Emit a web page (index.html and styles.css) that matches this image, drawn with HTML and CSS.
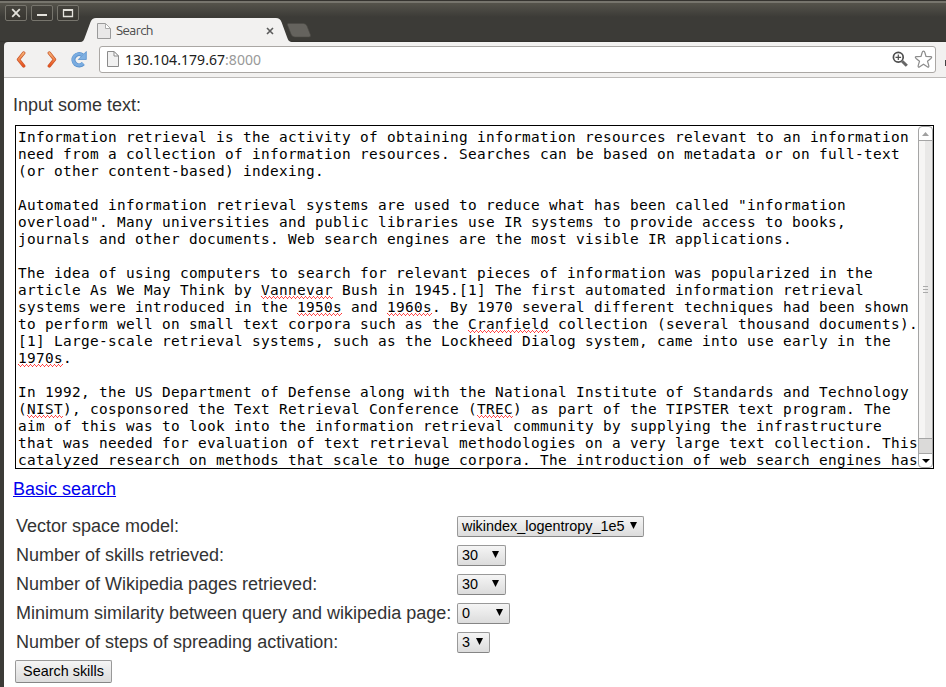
FILE: index.html
```html
<!DOCTYPE html>
<html lang="en">
<head>
<meta charset="utf-8">
<title>Search</title>
<link rel="stylesheet" href="styles.css">
</head>
<body>
<div class="window">
  <header class="titlebar">
    <div class="controls">
      <span class="control"><svg width="20" height="14" viewBox="0 0 20 14"><path d="M6.2 3.2l7.6 7.6M13.800 3.200l-7.600 7.600" stroke="#e4e2dc" stroke-width="1.800"/></svg></span>
      <span class="control"><svg width="20" height="14" viewBox="0 0 20 14"><path d="M5 9h10" stroke="#e4e2dc" stroke-width="2"/></svg></span>
      <span class="control"><svg width="20" height="14" viewBox="0 0 20 14"><path d="M5.500 4h9v6.500h-9z" fill="none" stroke="#e4e2dc" stroke-width="1.300"/><path d="M5 4h10" stroke="#e4e2dc" stroke-width="2"/></svg></span>
    </div>
    <div class="tab">
      <svg class="tab-shape" width="214" height="24" viewBox="0 0 214 24"><path d="M0 24C3 24 4 22 5 19L10.500 4Q12 0 16 0H196Q200 0 201.500 4L207 19C208 22 209 24 213 24Z" fill="#f2f1f0"/></svg>
      <div class="tab-content">
        <svg width="14" height="16" viewBox="0 0 14 16"><path d="M.5.5h8l5 5v10H.5z" fill="#e9e8e8" stroke="#9a9a9a"/><path d="M8.500.500v5h5z" fill="#fff" stroke="#aaa"/></svg>
        <span class="tab-title">Search</span>
        <svg class="tab-close" width="8" height="8" viewBox="0 0 8 8"><path d="M1 1l6 6M7 1L1 7" stroke="#5b5b5b" stroke-width="1.600"/></svg>
      </div>
    </div>
    <svg class="new-tab" width="26" height="15" viewBox="0 0 26 15"><path d="M2 .5H17.500Q20 .5 21 3L24.500 12Q25 14 23 14H9Q6 14 5 11L1.500 2Q1 .5 2 .5Z" fill="#65635e" stroke="#4b4944" stroke-width=".6"/></svg>
  </header>
  <div class="toolbar">
    <svg class="back" width="10" height="17" viewBox="0 0 10 17"><path d="M7.700 2L2.500 8.500l5.200 6.500" fill="none" stroke="#c9572c" stroke-width="3.400" stroke-linecap="round" stroke-linejoin="round"/><path d="M7.700 2L2.500 8.500l5.200 6.500" fill="none" stroke="url(#orange)" stroke-width="2" stroke-linecap="round" stroke-linejoin="round"/><defs><linearGradient id="orange" x2="0" y2="1"><stop stop-color="#f6b476"/><stop offset="1" stop-color="#e9501c"/></linearGradient></defs></svg>
    <svg class="forward" width="10" height="17" viewBox="0 0 10 17"><path d="M2.300 2l5.200 6.500L2.300 15" fill="none" stroke="#c9572c" stroke-width="3.400" stroke-linecap="round" stroke-linejoin="round"/><path d="M2.300 2l5.200 6.500L2.300 15" fill="none" stroke="url(#orange)" stroke-width="2" stroke-linecap="round" stroke-linejoin="round"/></svg>
    <svg class="reload" width="17" height="17" viewBox="0 0 17 17"><path d="M12.500 4.300A5.600 5.600 0 1 0 13.300 12.500" fill="none" stroke="#5b92cd" stroke-width="4.200"/><path d="M16.300.5v8H8.300z" fill="#7fb0e2" stroke="#5b92cd" stroke-width=".8"/><path d="M12.500 4.300A5.600 5.600 0 1 0 13 12.300" fill="none" stroke="#7aace0" stroke-width="2.800"/></svg>
    <div class="address">
      <svg width="12" height="16" viewBox="0 0 12 16"><path d="M.5.5h6.500l4.500 4.500v10.500H.5z" fill="#f1f1f1" stroke="#8b8b8b"/><path d="M7 .5V5h4.500z" fill="#fff" stroke="#8b8b8b"/></svg>
      <span class="url">130.104.179.67<span class="port">:8000</span></span>
      <svg class="magnifier" width="17" height="17" viewBox="0 0 17 17"><circle cx="6.300" cy="6.300" r="4.900" fill="#fff" stroke="#4d4d4d" stroke-width="1.700"/><path d="M3.500 6.300h5.600M6.300 3.500v5.600" stroke="#4d4d4d" stroke-width="1.200"/><path d="M10.200 10.200l4.600 4.600" stroke="#666" stroke-width="3"/></svg>
      <svg class="star" width="19" height="19" viewBox="0 0 19 19"><path d="M9.500 1.200Q10.500 1.200 11 3l1 3.500 4.500.2q2.200.2.400 1.800l-3.400 2.700 1.300 4.500q.4 2.200-1.500 1L9.500 14.200l-3.800 2.500q-1.900 1.200-1.500-1l1.300-4.500L2.100 8.500Q.3 6.900 2.500 6.700L7 6.500 8 3q.5-1.800 1.500-1.800z" fill="#fff" stroke="#8b8b8b" stroke-width="1.200"/></svg>
    </div>
    <span class="menu-edge"></span>
  </div>
  <main class="page">
    <div class="prompt">Input some text:</div>
    <div class="textbox">
<div class="text">Information retrieval is the activity of obtaining information resources relevant to an information
need from a collection of information resources. Searches can be based on metadata or on full-text
(or other content-based) indexing.

Automated information retrieval systems are used to reduce what has been called "information
overload". Many universities and public libraries use IR systems to provide access to books,
journals and other documents. Web search engines are the most visible IR applications.

The idea of using computers to search for relevant pieces of information was popularized in the
article As We May Think by <span class="sp">Vannevar</span> Bush in 1945.[1] The first automated information retrieval
systems were introduced in the <span class="sp">1950s</span> and <span class="sp">1960s</span>. By 1970 several different techniques had been shown
to perform well on small text corpora such as the <span class="sp">Cranfield</span> collection (several thousand documents).
[1] Large-scale retrieval systems, such as the Lockheed Dialog system, came into use early in the
<span class="sp">1970s</span>.

In 1992, the US Department of Defense along with the National Institute of Standards and Technology
(<span class="sp">NIST</span>), cosponsored the Text Retrieval Conference (<span class="sp">TREC</span>) as part of the TIPSTER text program. The
aim of this was to look into the information retrieval community by supplying the infrastructure
that was needed for evaluation of text retrieval methodologies on a very large text collection. This
catalyzed research on methods that scale to huge corpora. The introduction of web search engines has</div>
      <div class="scrollbar">
        <span class="arrow"><svg width="7" height="4" viewBox="0 0 7 4"><path d="M0 4L3.500 0 7 4z" fill="#a0a0a0"/></svg></span>
        <span class="thumb"><i></i><i></i><i></i></span>
        <span class="track"></span>
        <span class="arrow down"><svg width="8" height="4" viewBox="0 0 8 4"><path d="M0 0h8L4 4z" fill="#000"/></svg></span>
      </div>
    </div>
    <a class="basic" href="#">Basic search</a>
    <div class="options">
      <span>Vector space model:</span><button class="select model">wikindex_logentropy_1e5<i></i></button>
      <span>Number of skills retrieved:</span><button class="select count">30<i></i></button>
      <span>Number of Wikipedia pages retrieved:</span><button class="select count">30<i></i></button>
      <span>Minimum similarity between query and wikipedia page:</span><button class="select minimum">0<i></i></button>
      <span>Number of steps of spreading activation:</span><button class="select steps">3<i></i></button>
    </div>
    <button class="submit">Search skills</button>
  </main>
</div>
</body>
</html>
```
FILE: styles.css
```css
* { box-sizing: border-box; }
html, body { margin: 0; height: 100%; overflow: hidden; }
body { background: #3c3b37; font-family: "Liberation Sans", Arial, sans-serif; }
svg { display: block; flex: none; }
.window { height: 687px; display: flex; flex-direction: column; border-left: 4px solid #3c3b37; }
.titlebar {
  height: 42px; flex: none; display: flex; margin-left: -4px;
  background: linear-gradient(#35332f 0 1px, #77756d 1px 3px, #55534b 3px, #3c3b37 17px, #3c3b37 40px, #302f2b 42px);
}
.controls { display: flex; gap: 4px; padding: 5px 0 0 5px; width: 80px; }
.control {
  width: 22px; height: 16px; border: 1px solid #77756d; border-radius: 2px;
  background: linear-gradient(#45433d, #383631);
}
.tab { width: 214px; margin-top: 18px; display: grid; }
.tab-shape, .tab-content { grid-area: 1 / 1; }
.tab-content { display: flex; align-items: center; height: 24px; padding: 1px 20px 0 17px; }
.tab-title { margin: -2px 0 0 5px; flex: 1; font: 13.5px/18px Ubuntu, "Noto Sans", sans-serif; letter-spacing: -.6px; color: #4c4c4c; }
.new-tab { margin: 23px 0 0 -8px; }
.toolbar {
  height: 36px; flex: none; display: flex; align-items: center; background: #f2f1f0;
  border-bottom: 1px solid #bcbab8; border-top-left-radius: 4px;
}
.back { margin-left: 12px; }
.forward { margin-left: 21px; }
.reload { margin-left: 13px; }
.address {
  margin: 0 0 1px 12px; width: 837px; height: 27px; display: flex; align-items: center;
  border: 1px solid #aaa7a4; border-radius: 3px; background: #fff; padding: 0 2px 0 7px;
}
.url { margin: 1px 0 0 6px; flex: 1; font: 14px/20px "Noto Sans", sans-serif; letter-spacing: .05px; color: #202020; }
.port { color: #999; }
.magnifier { margin-right: 5px; }
.menu-edge { margin: 7px 0 0 auto; width: 1px; height: 6px; background: #444; }
.page { flex: 1; background: #fff; padding: 16px 12px 0 9px; color: #333; font-size: 18px; }
.prompt { height: 22px; line-height: 22px; }
.textbox { width: 919px; height: 344px; margin: 9px 0 0 2px; border: 1px solid #000; display: flex; color: #000; }
.text {
  flex: 1; min-width: 0; height: 339px; margin: 3px 0 0 2px; font: 14.4px/17px "DejaVu Sans Mono", monospace;
  letter-spacing: .336px; white-space: pre;
}
.sp {
  display: inline-block; height: 17px; vertical-align: top;
  background:
    repeating-linear-gradient(90deg, #f33 0 1px, transparent 1px 4px) 0 calc(100% - 2px) / 100% 1px no-repeat,
    repeating-linear-gradient(90deg, transparent 0 1px, #f55 1px 2px, transparent 2px 3px, #f55 3px 4px) 0 calc(100% - 1px) / 100% 1px no-repeat,
    repeating-linear-gradient(90deg, transparent 0 2px, #f33 2px 3px, transparent 3px 4px) 0 100% / 100% 1px no-repeat;
}
.scrollbar { width: 15px; display: flex; flex-direction: column; border: 1px solid #a5a5a5; border-radius: 4px; flex: none; }
.arrow { height: 14px; display: grid; place-items: center; border-bottom: 1px solid #a5a5a5; }
.thumb { flex: 1; display: flex; flex-direction: column; gap: 2px; align-items: center; justify-content: center; background: linear-gradient(90deg, #f6f5f4 50%, #e9e8e7 50%); }
.thumb i { width: 5px; height: 1px; background: #aaa; }
.track { height: 16px; background: #dbdad9; border: solid #a5a5a5; border-width: 1px 0; }
.arrow.down { height: 13px; border: 0; }
.basic { display: block; width: max-content; margin-top: 9px; line-height: 22px; color: #00e; }
.options {
  display: grid; grid-template-columns: 441px max-content; grid-auto-rows: 29px; align-items: center;
  margin: 12px 0 0 3px; line-height: 22px; white-space: nowrap;
}
.options span { padding-bottom: 2px; }
button {
  font: 14.4px/18px "Liberation Sans", Arial, sans-serif; color: #000; border: 1px solid #999;
  border-bottom-color: #858585; border-radius: 2px; background: linear-gradient(#f5f5f5, #dcdcdc); padding: 0 4px; margin: 0;
}
.select { height: 21px; display: flex; justify-content: space-between; align-items: center; padding-bottom: 1px; }
.select i { width: 7px; height: 7px; margin: -1px 2px 0 0; background: #000; clip-path: polygon(0 0, 100% 0, 50% 100%); }
.model { width: 187px; }
.count { width: 49px; }
.minimum { width: 53px; }
.steps { width: 33px; }
.submit { display: block; width: 97px; height: 23px; margin: 3px 0 0 2px; padding: 0 0 1px; }
```
